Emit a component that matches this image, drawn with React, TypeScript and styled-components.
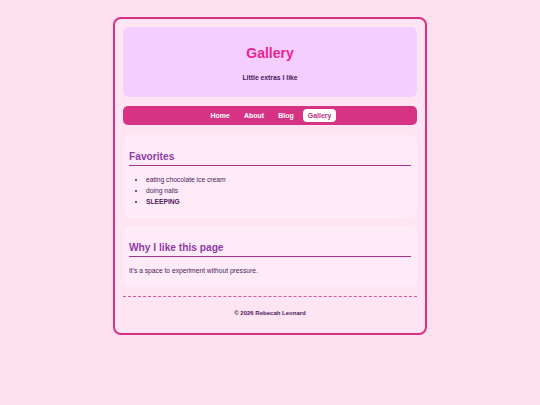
import React from "react";
import styled, { createGlobalStyle } from "styled-components";

const Global = createGlobalStyle`
  html, body { margin: 0; padding: 0; background: #ffe0ef; }
  body { font-family: "Liberation Sans", Arial, sans-serif; }
`;

const Page = styled.div`
  padding-top: 17px;
  display: flex;
  justify-content: center;
`;

const Container = styled.div`
  width: 314px;
  box-sizing: border-box;
  border: 2px solid #d63384;
  border-radius: 8px;
  background: #ffe4f2;
  padding: 8px 8px 0;
  display: flex;
  flex-direction: column;
`;

const Header = styled.header`
  background: #f4ceff;
  border-radius: 6px;
  padding: 16px 0 14px;
  text-align: center;
`;

const Title = styled.h1`
  margin: 0;
  font-size: 14px;
  line-height: 20px;
  color: #ec1f8e;
  font-weight: bold;
`;

const Subtitle = styled.p`
  margin: 10px 0 0;
  font-size: 6.8px;
  line-height: 10px;
  font-weight: bold;
  color: #4a1a5c;
`;

const Nav = styled.nav`
  margin-top: 9px;
  background: #d63384;
  border-radius: 5px;
  height: 19px;
  display: flex;
  align-items: center;
  justify-content: center;
  gap: 4px;
  padding-left: 2px;
`;

const NavLink = styled.a<{ $active?: boolean }>`
  font-size: 7px;
  font-weight: bold;
  line-height: 13px;
  padding: 0 5px;
  border-radius: 4px;
  color: ${(p) => (p.$active ? "#c0307a" : "#ffffff")};
  background: ${(p) => (p.$active ? "#ffffff" : "transparent")};
  text-decoration: none;
`;

const Section = styled.section<{ $gap: number }>`
  margin-top: ${(p) => p.$gap}px;
  background: #ffebf7;
  border-radius: 6px;
  padding: 15px 6px 11px;
`;

const Heading = styled.h2`
  margin: 0;
  font-size: 10.2px;
  line-height: 14px;
  color: #8e3ba8;
  font-weight: bold;
  padding-bottom: 1px;
  border-bottom: 1px solid #a8338c;
`;

const List = styled.ul`
  margin: 8px 0 0;
  padding-left: 17px;
  font-size: 6.7px;
  line-height: 11px;
  color: #4a1a5c;
`;

const Item = styled.li<{ $bold?: boolean }>`
  font-weight: ${(p) => (p.$bold ? "bold" : "normal")};
`;

const Para = styled.p`
  margin: 8px 0 0;
  font-size: 6.7px;
  line-height: 11px;
  color: #4a1a5c;
`;

const Footer = styled.footer`
  margin-top: 9px;
  border-top: 1px dashed #d05a9e;
  padding: 11px 0 15px;
  text-align: center;
  font-size: 6px;
  line-height: 10px;
  font-weight: bold;
  color: #4a1a5c;
`;

export default function App() {
  return (
    <>
      <Global />
      <Page>
        <Container>
          <Header>
            <Title>Gallery</Title>
            <Subtitle>Little extras I like</Subtitle>
          </Header>
          <Nav>
            <NavLink>Home</NavLink>
            <NavLink>About</NavLink>
            <NavLink>Blog</NavLink>
            <NavLink $active>Gallery</NavLink>
          </Nav>
          <Section $gap={10}>
            <Heading>Favorites</Heading>
            <List>
              <Item>eating chocolate ice cream</Item>
              <Item>doing nails</Item>
              <Item $bold>SLEEPING</Item>
            </List>
          </Section>
          <Section $gap={8}>
            <Heading>Why I like this page</Heading>
            <Para>It's a space to experiment without pressure.</Para>
          </Section>
          <Footer>© 2026 Rebecah Leonard</Footer>
        </Container>
      </Page>
    </>
  );
}
